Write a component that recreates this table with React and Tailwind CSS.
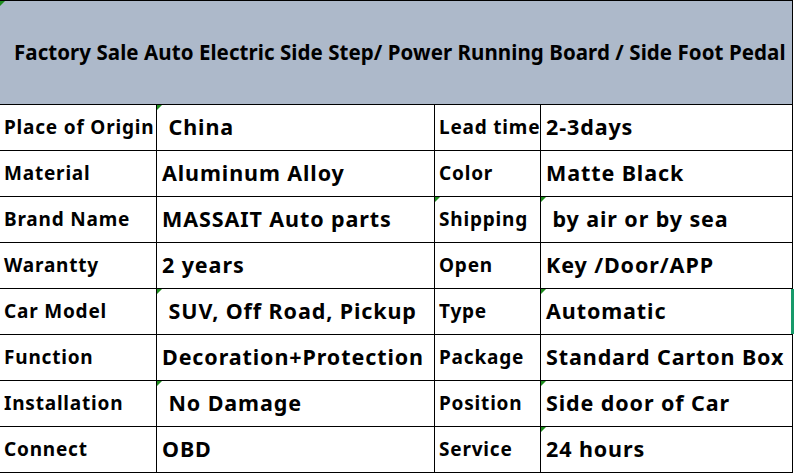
const rows = [
  ["Place of Origin", " China", "Lead time", "2-3days", [1, 0, 0]],
  ["Material", "Aluminum Alloy", "Color", "Matte Black", [0, 0, 0]],
  ["Brand Name", "MASSAIT Auto parts", "Shipping", " by air or by sea", [0, 1, 1]],
  ["Warantty", "2 years", "Open", "Key /Door/APP", [0, 0, 0]],
  ["Car Model", " SUV, Off Road, Pickup", "Type", "Automatic", [1, 0, 1]],
  ["Function", "Decoration+Protection", "Package", "Standard Carton Box", [0, 0, 0]],
  ["Installation", " No Damage", "Position", "Side door of Car", [1, 0, 1]],
  ["Connect", "OBD", "Service", "24 hours", [0, 0, 1]],
];

const Flag = () => (
  <span className="absolute left-0 top-0 w-0 h-0 border-t-[5px] border-t-[#1e8c1e] border-r-[5px] border-r-transparent" />
);

const App = () => {
  return (
    <div className="w-[794px] h-[474px] bg-white text-black font-bold" style={{ fontFamily: '"Noto Sans", "Open Sans", sans-serif' }}>
      <div className="relative w-[793px] h-[105px] border-t border-b border-r border-black bg-[#adb9ca] flex items-center pl-[14px] text-[20.5px] tracking-[0.06px] whitespace-nowrap">
        <Flag />
        Factory Sale Auto Electric Side Step/ Power Running Board / Side Foot Pedal
      </div>
      {rows.map(([l1, v1, l2, v2, flags], i) => (
        <div key={i} className="flex h-[46px] w-[793px] border-b border-black whitespace-pre">
          <div className="w-[157px] border-r border-black flex items-center pl-[4px] text-[19px] tracking-[0.8px]">{l1}</div>
          <div className="relative w-[278px] border-r border-black flex items-center pl-[5px] text-[21.5px] tracking-[0.9px]">
            {flags[0] ? <Flag /> : null}
            {v1}
          </div>
          <div className="relative w-[106px] border-r border-black flex items-center pl-[4px] text-[19px] tracking-[0.8px]">
            {flags[1] ? <Flag /> : null}
            {l2}
          </div>
          <div className="relative w-[252px] border-r border-black flex items-center pl-[5px] text-[21.5px] tracking-[0.9px]">
            {flags[2] ? <Flag /> : null}
            {v2}
            {i === 4 ? <span className="absolute right-[-2px] top-0 h-full w-[3px] bg-[#179a6a]" /> : null}
          </div>
        </div>
      ))}
    </div>
  );
};

export default App;
